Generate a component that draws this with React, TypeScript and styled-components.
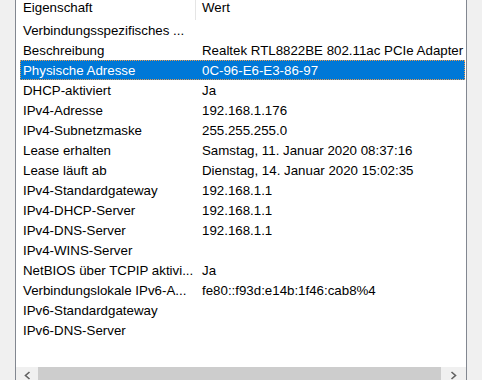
import styled, { createGlobalStyle } from "styled-components";

const GlobalStyle = createGlobalStyle`
  html, body {
    margin: 0;
    padding: 0;
    background: #f0f0f0;
  }
  body {
    font-family: "Liberation Sans", Arial, sans-serif;
    font-size: 13.3px;
    color: #000;
  }
`;

const Dialog = styled.div`
  display: flex;
  width: 482px;
  height: 380px;
  overflow: hidden;
  background: #f0f0f0;
`;

const Side = styled.div`
  width: 15px;
  flex-shrink: 0;
  background: #f0f0f0;
`;

const ListView = styled.div`
  display: flex;
  flex-direction: column;
  width: 450px;
  height: 384px;
  flex-shrink: 0;
  background: #fff;
  border-left: 1px solid #828790;
  border-right: 1px solid #828790;
`;

const Header = styled.div`
  display: flex;
  height: 20px;
  flex-shrink: 0;
`;

const HeaderCell = styled.div<{ $w?: number; $pad: number; $sep?: boolean }>`
  width: ${(p) => (p.$w ? `${p.$w}px` : "auto")};
  flex: ${(p) => (p.$w ? "none" : "1")};
  box-sizing: border-box;
  padding-left: ${(p) => p.$pad}px;
  line-height: 15px;
  border-right: ${(p) => (p.$sep ? "1px solid #e5e5e5" : "none")};
  white-space: nowrap;
`;

const Rows = styled.div`
  flex: 1;
  display: flex;
  flex-direction: column;
  padding-left: 4px;
  padding-right: 1px;
`;

const Row = styled.div<{ $selected?: boolean }>`
  display: flex;
  height: 20px;
  box-sizing: border-box;
  align-items: center;
  background: ${(p) => (p.$selected ? "#0078d7" : "transparent")};
  color: ${(p) => (p.$selected ? "#fff" : "#000")};
  border: 1px dotted ${(p) => (p.$selected ? "#e89a50" : "transparent")};
  white-space: nowrap;
`;

const NameCell = styled.div`
  width: 175px;
  flex-shrink: 0;
  padding-left: 2px;
  box-sizing: border-box;
`;

const ValueCell = styled.div`
  flex: 1;
  padding-left: 6px;
  overflow: hidden;
`;

const HScroll = styled.div`
  display: flex;
  height: 17px;
  flex-shrink: 0;
  background: #f0f0f0;
`;

const ArrowButton = styled.div<{ $w: number }>`
  width: ${(p) => p.$w}px;
  flex-shrink: 0;
  display: flex;
  align-items: center;
  justify-content: center;
`;

const Thumb = styled.div`
  flex: 1;
  background: #cdcdcd;
`;

const rows: [string, string][] = [
  ["Verbindungsspezifisches ...", ""],
  ["Beschreibung", "Realtek RTL8822BE 802.11ac PCIe Adapter"],
  ["Physische Adresse", "0C-96-E6-E3-86-97"],
  ["DHCP-aktiviert", "Ja"],
  ["IPv4-Adresse", "192.168.1.176"],
  ["IPv4-Subnetzmaske", "255.255.255.0"],
  ["Lease erhalten", "Samstag, 11. Januar 2020 08:37:16"],
  ["Lease läuft ab", "Dienstag, 14. Januar 2020 15:02:35"],
  ["IPv4-Standardgateway", "192.168.1.1"],
  ["IPv4-DHCP-Server", "192.168.1.1"],
  ["IPv4-DNS-Server", "192.168.1.1"],
  ["IPv4-WINS-Server", ""],
  ["NetBIOS über TCPIP aktivi...", "Ja"],
  ["Verbindungslokale IPv6-A...", "fe80::f93d:e14b:1f46:cab8%4"],
  ["IPv6-Standardgateway", ""],
  ["IPv6-DNS-Server", ""],
];

function Chevron({ dir }: { dir: "left" | "right" }) {
  const d = dir === "left" ? "M5.5 1 L1.5 4.5 L5.5 8" : "M1.5 1 L5.5 4.5 L1.5 8";
  return (
    <svg width="7" height="9" viewBox="0 0 7 9">
      <path d={d} fill="none" stroke="#606060" strokeWidth="1.6" />
    </svg>
  );
}

export default function App() {
  return (
    <>
      <GlobalStyle />
      <Dialog>
        <Side />
        <ListView>
          <Header>
            <HeaderCell $w={180} $pad={7} $sep>
              Eigenschaft
            </HeaderCell>
            <HeaderCell $pad={6}>Wert</HeaderCell>
          </Header>
          <Rows>
            {rows.map(([name, value], idx) => (
              <Row key={idx} $selected={idx === 2}>
                <NameCell>{name}</NameCell>
                <ValueCell>{value}</ValueCell>
              </Row>
            ))}
          </Rows>
          <HScroll>
            <ArrowButton $w={22}>
              <Chevron dir="left" />
            </ArrowButton>
            <Thumb />
            <ArrowButton $w={25}>
              <Chevron dir="right" />
            </ArrowButton>
          </HScroll>
        </ListView>
        <Side />
      </Dialog>
    </>
  );
}
